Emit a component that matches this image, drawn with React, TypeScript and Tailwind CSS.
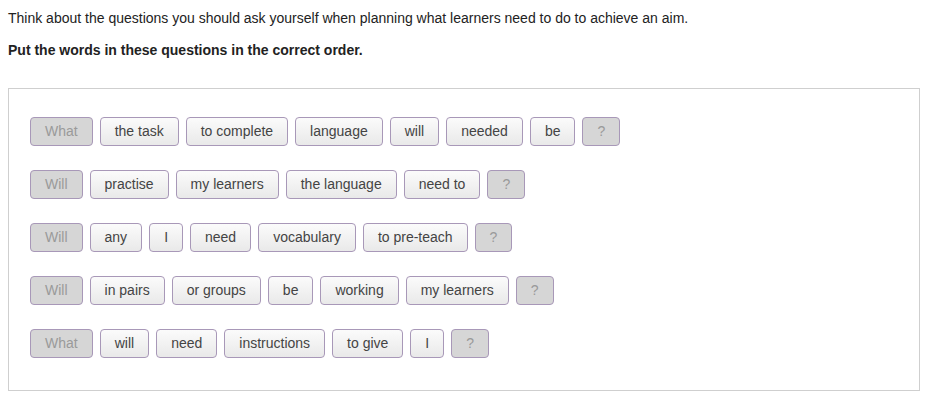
const rows: { first: string; words: string[] }[] = [
  { first: 'What', words: ['the task', 'to complete', 'language', 'will', 'needed', 'be'] },
  { first: 'Will', words: ['practise', 'my learners', 'the language', 'need to'] },
  { first: 'Will', words: ['any', 'I', 'need', 'vocabulary', 'to pre-teach'] },
  { first: 'Will', words: ['in pairs', 'or groups', 'be', 'working', 'my learners'] },
  { first: 'What', words: ['will', 'need', 'instructions', 'to give', 'I'] },
];

function Chip({ label, muted }: { label: string; muted?: boolean }) {
  return (
    <div
      className={
        muted
          ? 'h-[29px] px-[14px] flex items-center rounded-[4px] border border-[#a898b8] bg-[#d6d6d6] text-[#9a9a9a]'
          : 'h-[29px] px-[14px] flex items-center rounded-[4px] border border-[#a898b8] bg-gradient-to-b from-[#fbfbfb] to-[#e9e9e9] text-[#444]'
      }
    >
      {label}
    </div>
  );
}

export default function App() {
  return (
    <div className="min-h-screen bg-white px-2 pt-[10px] text-[14px] text-[#222] font-['Liberation_Sans',Arial,sans-serif]">
      <p className="leading-[16px]">
        Think about the questions you should ask yourself when planning what learners need to do to achieve an aim.
      </p>
      <p className="mt-[16px] font-bold leading-[16px]">Put the words in these questions in the correct order.</p>

      <div className="mt-[30px] w-[912px] border border-[#cfcfcf] pl-[21px] pt-[28px] pb-[32px] flex flex-col gap-[24px] text-[14px]">
        {rows.map((r, i) => (
          <div key={i} className="flex gap-[7px]">
            <Chip label={r.first} muted />
            {r.words.map((w, j) => (
              <Chip key={j} label={w} />
            ))}
            <Chip label="?" muted />
          </div>
        ))}
      </div>
    </div>
  );
}
